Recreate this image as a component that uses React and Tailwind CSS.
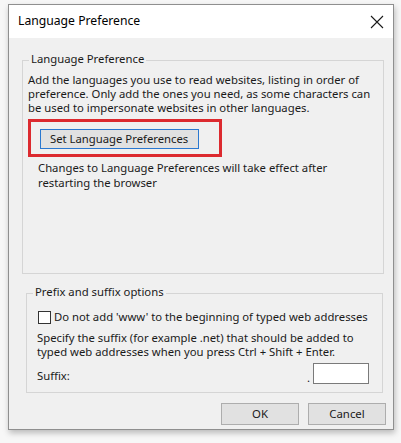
import React from 'react';

const font = { fontFamily: '"Noto Sans", "Liberation Sans", sans-serif' };

const Group = ({ label, className, children }) => (
  <div className={`border border-[#d5d5d5] ${className}`}>
    <span className="-mt-[10px] ml-[6px] block w-fit bg-[#f0f0f0] px-[2px] leading-[16px]">{label}</span>
    {children}
  </div>
);

const Button = ({ children }) => (
  <button className="flex h-[22px] w-[78px] items-center justify-center border border-[#adadad] bg-[#e1e1e1] text-[11.4px] text-[#1a1a1a]">
    {children}
  </button>
);

export default function App() {
  return (
    <div className="h-[443px] w-[401px] overflow-hidden whitespace-nowrap bg-[#f7f7f7] pl-[8px] pt-[4px] text-[11.3px] text-[#1a1a1a]" style={font}>
      <div className="flex h-[426px] w-[386px] flex-col border border-[#8f8f8f] bg-[#f0f0f0] shadow-[1px_3px_6px_rgba(0,0,0,0.25)]">
        <div className="flex h-[33px] shrink-0 items-center justify-between bg-white pl-[9px] pr-[7px]">
          <span className="text-[12.2px] leading-none text-black">Language Preference</span>
          <svg width="14" height="14" viewBox="0 0 14 14" className="mr-[2px]">
            <path d="M1 1 L13 13 M13 1 L1 13" stroke="#1a1a1a" strokeWidth="1.1" fill="none" />
          </svg>
        </div>

        <div className="flex flex-col pl-[13px] pt-[22px]">
          <Group label="Language Preference" className="h-[214px] w-[362px]">
            <p className="mt-[6px] pl-[5px] leading-[14px]">
              Add the languages you use to read websites, listing in order of
              <br />
              preference. Only add the ones you need, as some characters can
              <br />
              be used to impersonate websites in other languages.
            </p>
            <div className="ml-[5px] mt-[4px] h-[38px] w-[194px] border-[3px] border-[#dc2a2f] pl-[9px] pt-[7px]">
              <button className="flex h-[20px] w-[159px] items-center border-[1.5px] border-[#2a78d0] bg-[#e1e1e1] pl-[9px] text-[11.3px] leading-none">
                Set Language Preferences
              </button>
            </div>
            <p className="mt-[3px] pl-[15px] leading-[15px]">
              Changes to Language Preferences will take effect after
              <br />
              restarting the browser
            </p>
          </Group>

          <Group label="Prefix and suffix options" className="ml-[4px] mt-[19px] h-[100px] w-[357px]">
            <div className="mt-[10px] flex items-center gap-[3px] pl-[11px]">
              <span className="h-[13px] w-[13px] shrink-0 border border-[#333] bg-white" />
              <span className="leading-[14px]">Do not add 'www' to the beginning of typed web addresses</span>
            </div>
            <p className="mt-[7px] pl-[10px] leading-[14px]">
              Specify the suffix (for example .net) that should be added to
              <br />
              typed web addresses when you press Ctrl + Shift + Enter.
            </p>
            <div className="mt-[4px] flex items-center pl-[10px] pr-[13px]">
              <span className="mt-[4px] leading-[14px]">Suffix:</span>
              <span className="ml-auto mr-[3px] mt-[8px] leading-[10px]">.</span>
              <span className="h-[21px] w-[56px] border border-[#7a7a7a] bg-white" />
            </div>
          </Group>

          <div className="mt-[10px] flex justify-end gap-[9px] pr-[7px]">
            <Button>OK</Button>
            <Button>Cancel</Button>
          </div>
        </div>
      </div>
    </div>
  );
}
